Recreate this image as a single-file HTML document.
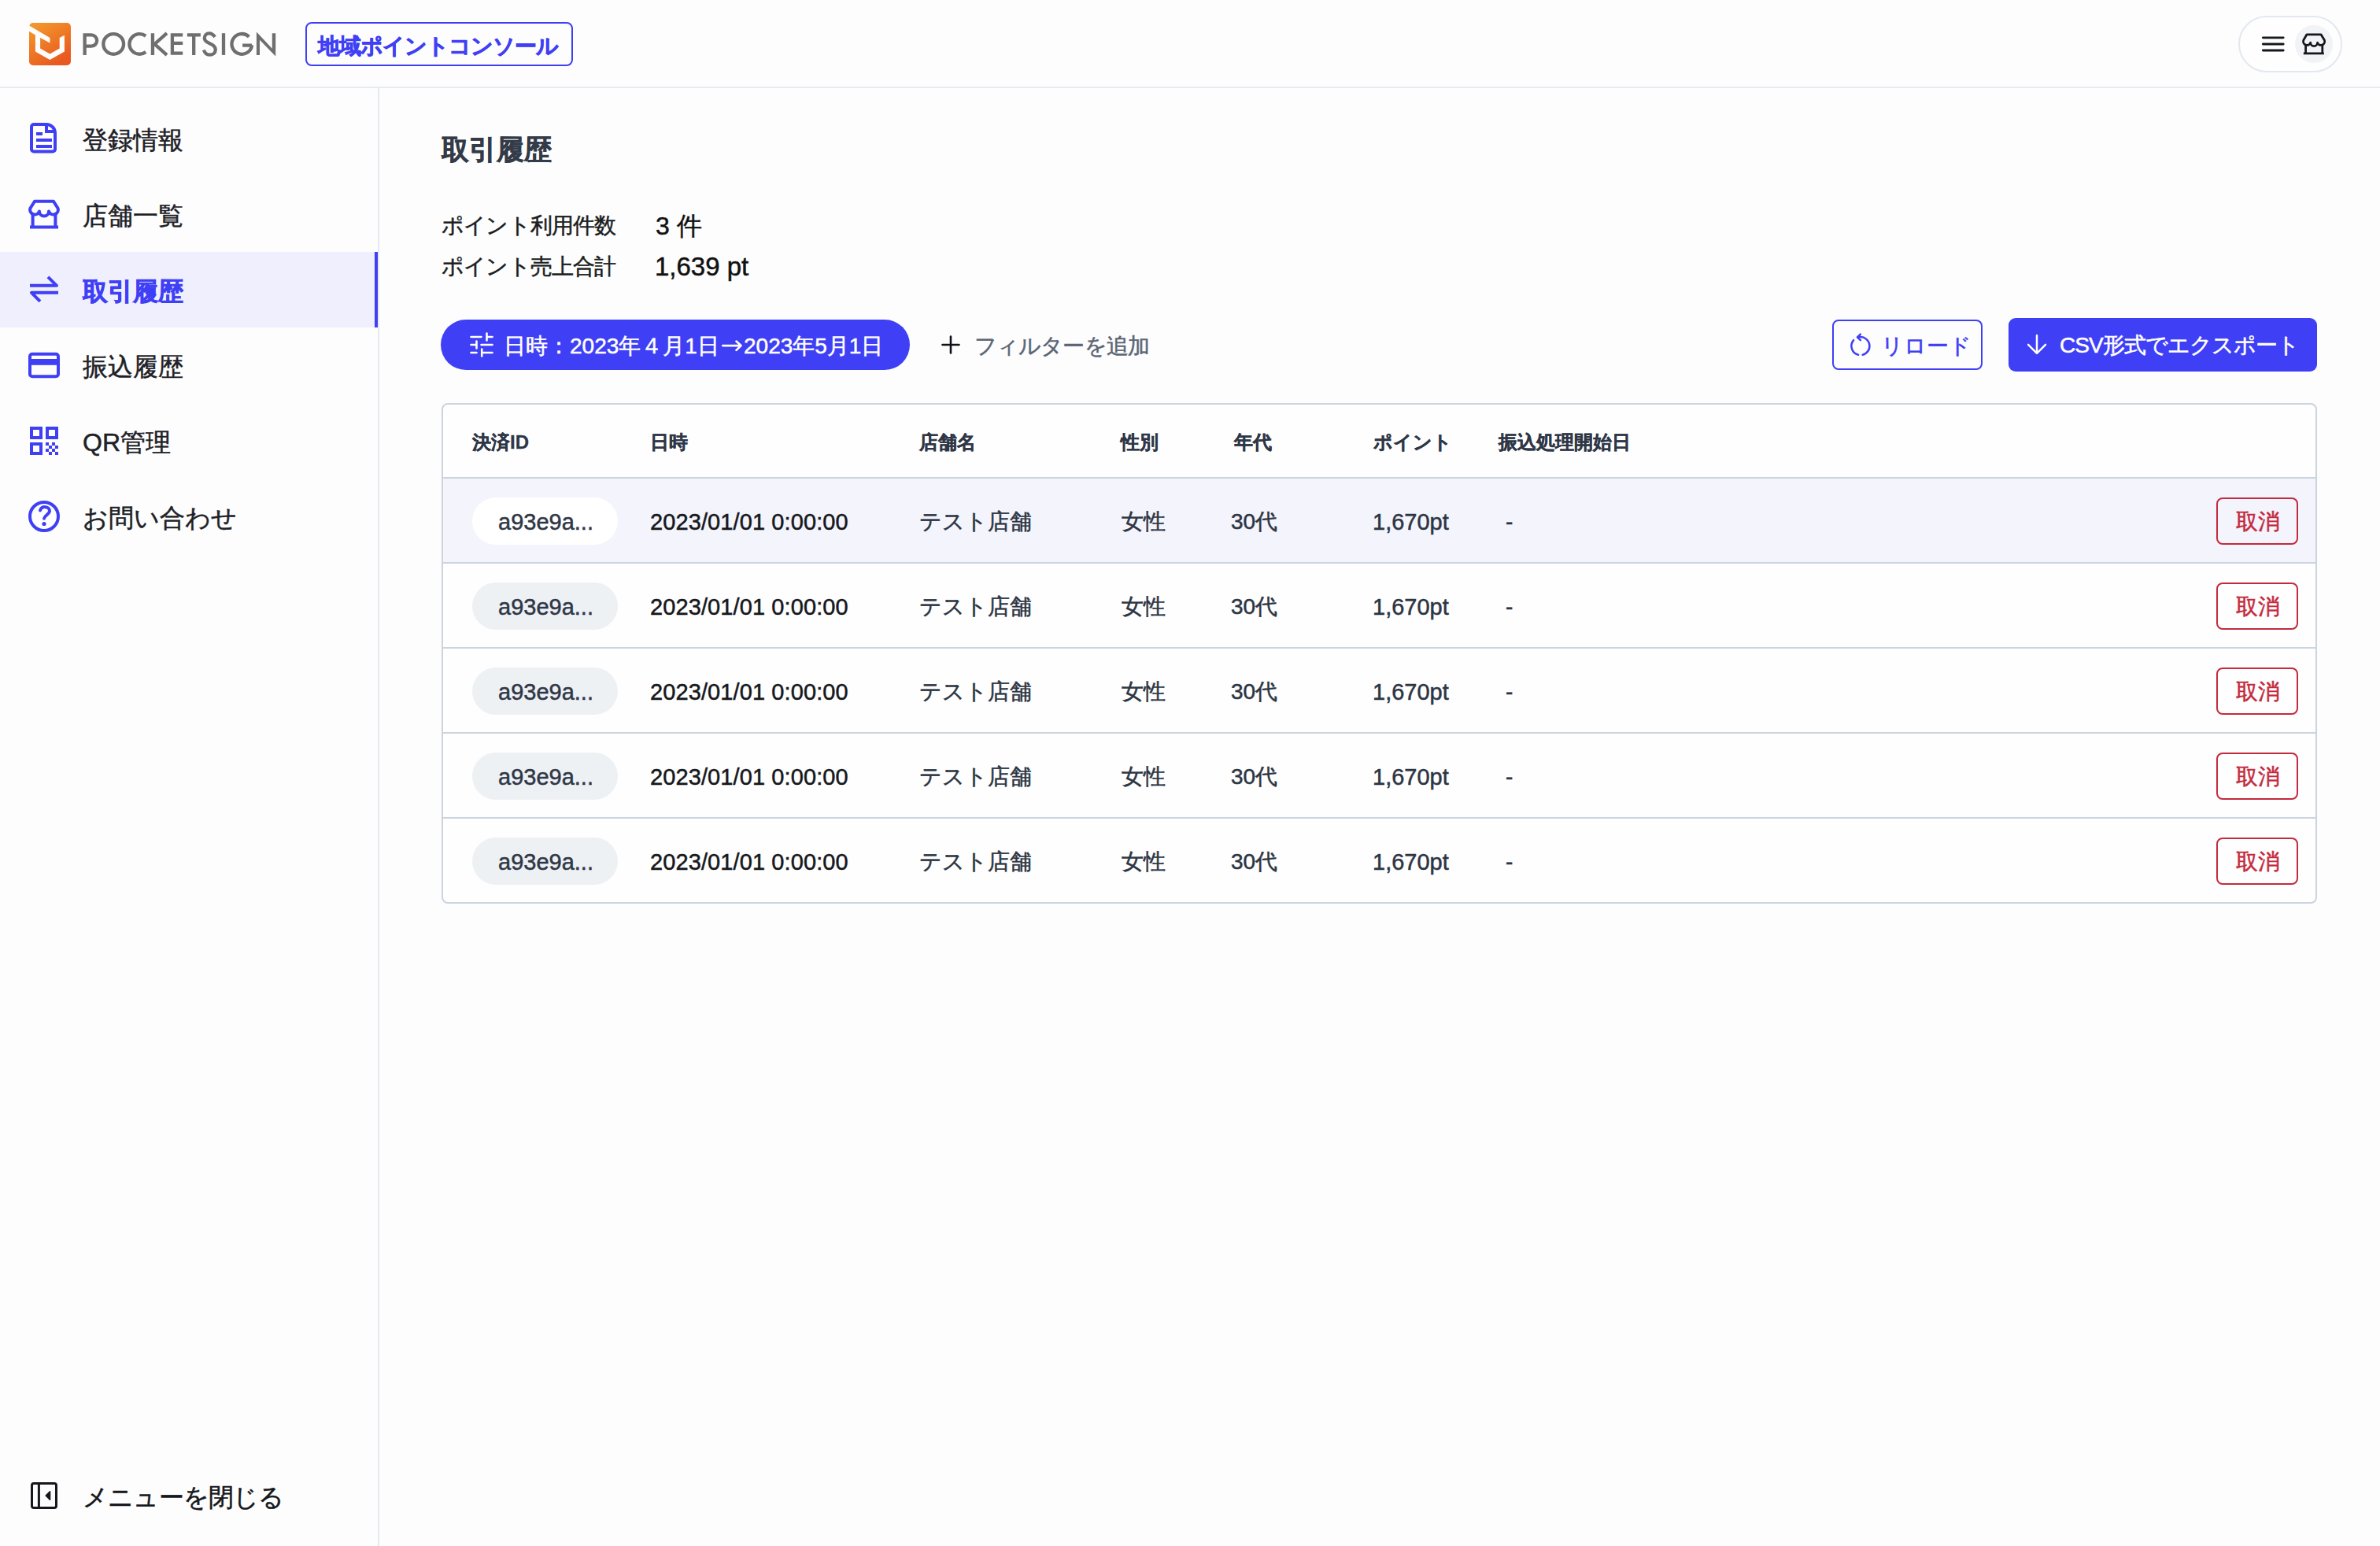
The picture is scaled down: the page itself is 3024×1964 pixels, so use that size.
<!DOCTYPE html>
<html lang="ja">
<head>
<meta charset="utf-8">
<style>
html,body{margin:0;padding:0;}
body{-webkit-text-stroke:0.5px currentColor;width:3024px;height:1964px;position:relative;overflow:hidden;background:#fdfdfd;font-family:"Liberation Sans",sans-serif;color:#1b1d22;}
.a{position:absolute;white-space:nowrap;}
svg{position:absolute;overflow:visible;}
.hdr{left:0;top:0;width:3024px;height:110px;border-bottom:2px solid #e6eaf0;background:#fdfdfd;}
.side{left:0;top:112px;width:480px;height:1852px;border-right:2px solid #e6eaf0;}
.nav{left:0;width:480px;height:96px;}
.navt{left:105px;font-size:32px;line-height:40px;color:#1e2127;}
.blue{color:#3f3ff5;}
.t-h{-webkit-text-stroke:0.3px currentColor;font-size:24px;font-weight:bold;line-height:30px;color:#2f3747;}
.t-b{letter-spacing:0;font-size:28px;line-height:34px;color:#16181c;}
.chip{left:600px;width:185px;height:60px;border-radius:30px;background:#eef1f4;}
.cancel{left:2816px;width:100px;height:56px;border:2px solid #c42a3d;border-radius:8px;}
.rowline{left:563px;width:2379px;height:2px;background:#cbd4df;}
</style>
</head>
<body>
<!-- HEADER -->
<div class="a hdr"></div>
<svg style="left:37px;top:29px" width="53" height="54" viewBox="0 0 53 54">
  <defs><linearGradient id="lg" x1="0" y1="0" x2="0.6" y2="1">
    <stop offset="0" stop-color="#f49d2d"/><stop offset="1" stop-color="#e8591f"/></linearGradient></defs>
  <rect x="0" y="0" width="53" height="54" rx="5" fill="url(#lg)"/>
  <path d="M-2 2.3 L26.4 18.9 L26.4 25.5 L14.1 18.9 L14.1 32.6 L26.4 39.6 L38.7 32.6 L38.7 18.9 L44.9 15.8 L44.9 36.5 L26.4 46.9 L7.9 36.5 L7.9 15.4 L-2 9.6 Z" fill="#fdfdfd"/>
</svg>
<svg style="left:100px;top:30px" width="260" height="50" viewBox="0 0 260 50" fill="none" stroke="#6f6f6f" stroke-width="4.3">
  <path d="M7.65 39.9 V14.4 H16 A7.15 7.15 0 0 1 16 28.7 H7.65"/>
  <circle cx="44.2" cy="25.9" r="12.85"/>
  <path d="M85.2 15.8 A12.85 12.85 0 1 0 85.2 36"/>
  <path d="M93.95 12.2 V39.9 M112 12.2 L96.5 26 L112 39.9"/>
  <path d="M132.2 14.4 H118.9 V37.7 H132.2 M118.9 24.85 H132.2" stroke-linejoin="miter"/>
  <path d="M137.9 14.4 H154.9 M146.2 14.4 V39.9"/>
  <path d="M173 17 C171 14 168.5 12.4 166 12.4 C162 12.4 159.8 15 159.8 18.5 C159.8 22 163 23.8 166.5 25.2 C171 27 173.8 29 173.8 33 C173.8 37 170.5 39.7 166.5 39.7 C162.5 39.7 160 37 159 33.5"/>
  <path d="M184 12.2 V39.9"/>
  <path d="M216.4 16.8 A12.85 12.85 0 1 0 220.1 27.2 M208.1 27.7 H220"/>
  <path d="M225.9 10.4 L245.8 31.7 L245.8 12.2 L250.2 12.2 L250.2 41.5 L230 20.8 L230 39.9 L225.9 39.9 Z" fill="#6f6f6f" stroke="none"/>
</svg>
<div class="a" style="left:388px;top:28px;width:336px;height:52px;border:2px solid #3f3ff5;border-radius:8px;"></div>
<div class="a blue" style="left:404px;top:39px;font-size:28px;line-height:40px;font-weight:bold;letter-spacing:-1px;-webkit-text-stroke:0.7px currentColor;">地域ポイントコンソール</div>

<div class="a" style="left:2844px;top:20px;width:128px;height:68px;border:2px solid #e3e8ef;border-radius:36px;background:#fefefe;"></div>
<svg style="left:2860px;top:30px" width="60" height="50" stroke="#15171c" stroke-width="2.8" stroke-linecap="round">
  <path d="M15.3 17.8 H41.2 M15.3 26 H41.2 M15.3 34 H41.2"/>
</svg>
<div class="a" style="left:2916px;top:32px;width:48px;height:48px;border-radius:24px;background:#f1f3f6;"></div>
<svg style="left:2910px;top:26px" width="60" height="60" viewBox="0 0 60 60" fill="none" stroke="#15171c" stroke-width="2.8" stroke-linejoin="round">
  <path d="M21 17.8 H39 L43.4 25 A4.6 4.6 0 0 1 34.5 28.2 A4.4 4.4 0 0 1 25.7 28.2 A4.6 4.6 0 0 1 16.8 25 Z"/>
  <path d="M19.6 30.5 V41.8 M40.8 30.5 V41.8 M16.8 41.8 H42.8"/>
</svg>

<!-- SIDEBAR -->
<div class="a side"></div>
<div class="a nav" style="top:320px;width:476px;background:#efeffd;"></div>
<div class="a" style="left:476px;top:320px;width:4px;height:96px;background:#3f3ff5;"></div>

<svg style="left:28px;top:146px" width="60" height="60" viewBox="0 0 60 60" fill="none" stroke="#3f3ff5" stroke-width="4">
  <path d="M31 12 H15 A3 3 0 0 0 12 15 V43.5 A3 3 0 0 0 15 46.5 H39 A3 3 0 0 0 42 43.5 V23 A11 11 0 0 0 31 12 Z"/>
  <path d="M31 12 V21 H42 M18 24 H26 M18 32 H38 M18 40 H38"/>
</svg>
<div class="a navt" style="top:158px;">登録情報</div>

<svg style="left:28px;top:242px" width="60" height="60" viewBox="0 0 60 60" fill="none" stroke="#3f3ff5" stroke-width="4" stroke-linejoin="round">
  <path d="M16 13.7 H40 L45.5 22.5 A6 6 0 0 1 34 26.5 A6 6 0 0 1 22 26.5 A6 6 0 0 1 10.5 22.5 Z"/>
  <path d="M13.6 30 V46.4 M42.4 30 V46.4 M10 46.4 H46"/>
</svg>
<div class="a navt" style="top:254px;">店舗一覧</div>

<svg style="left:28px;top:338px" width="60" height="60" viewBox="0 0 60 60" fill="none" stroke="#3f3ff5" stroke-width="4" stroke-linejoin="round">
  <path d="M10 24.8 H44 L33 13.8 M46 33.8 H12 L23 44.8"/>
</svg>
<div class="a navt blue" style="top:350px;font-weight:bold;-webkit-text-stroke:0.7px currentColor;">取引履歴</div>

<svg style="left:28px;top:434px" width="60" height="60" viewBox="0 0 60 60" fill="none" stroke="#3f3ff5" stroke-width="4">
  <rect x="10" y="15.8" width="36" height="28.5" rx="3"/>
  <rect x="10" y="22" width="36" height="7.8" fill="#3f3ff5" stroke="none"/>
</svg>
<div class="a navt" style="top:446px;">振込履歴</div>

<svg style="left:28px;top:530px" width="60" height="60" viewBox="0 0 60 60" fill="#3f3ff5">
  <path fill-rule="evenodd" d="M10 12 H26 V28 H10 Z M14 16 V24 H22 V16 Z M30 12 H46 V28 H30 Z M34 16 V24 H42 V16 Z M10 32 H26 V48 H10 Z M14 36 V44 H22 V36 Z"/>
  <path d="M30 32 h4 v4 h-4z M38 32 h4 v4 h-4z M34 36 h4 v4 h-4z M42 36 h4 v4 h-4z M30 40 h4 v4 h-4z M38 40 h4 v4 h-4z M34 44 h4 v4 h-4z M42 44 h4 v4 h-4z"/>
</svg>
<div class="a navt" style="top:542px;">QR管理</div>

<svg style="left:28px;top:626px" width="60" height="60" viewBox="0 0 60 60" fill="none" stroke="#3f3ff5" stroke-width="4" stroke-linecap="round">
  <circle cx="28" cy="30" r="18"/>
  <path d="M23 22.4 C24 19.5 26 18 28.5 18 C32 18 35 20 35 23 C35 27 29 28.5 28 32.6"/>
  <circle cx="28" cy="39.5" r="2.6" fill="#3f3ff5" stroke="none"/>
</svg>
<div class="a navt" style="top:638px;">お問い合わせ</div>

<svg style="left:28px;top:1870px" width="60" height="60" viewBox="0 0 60 60" fill="none" stroke="#15171c" stroke-width="3">
  <rect x="12.5" y="14.5" width="31" height="31" rx="2.5"/>
  <path d="M21.4 14.5 V45.5"/>
  <path d="M35.5 24.9 L30.2 30 L35.5 35.2 Z" fill="#15171c" stroke-width="1.6" stroke-linejoin="round"/>
</svg>
<div class="a navt" style="top:1882px;color:#15171c;letter-spacing:-0.8px;">メニューを閉じる</div>

<!-- MAIN -->
<div class="a" style="left:561px;top:169px;font-size:35px;line-height:42px;font-weight:bold;color:#333a48;-webkit-text-stroke:0.5px currentColor;">取引履歴</div>
<div class="a" style="left:561px;top:270px;font-size:28px;line-height:34px;color:#1b1d22;letter-spacing:-0.8px;">ポイント利用件数</div>
<div class="a" style="left:561px;top:322px;font-size:28px;line-height:34px;color:#1b1d22;letter-spacing:-0.8px;">ポイント売上合計</div>
<div class="a" style="left:833px;top:268px;font-size:32px;line-height:38px;color:#111;">3 件</div>
<div class="a" style="left:832px;top:320px;font-size:33px;line-height:38px;color:#111;">1,639 pt</div>

<!-- filter row -->
<div class="a" style="left:560px;top:406px;width:596px;height:64px;border-radius:32px;background:#3f3ff5;"></div>
<svg style="left:580px;top:410px" width="60" height="56" fill="none" stroke="#fff" stroke-width="2.6" stroke-linecap="round">
  <path d="M18.5 18 H31.5 M38.5 13.5 V22.5 M38.5 18 H45.5 M18.5 28 H25.5 M25.5 23.5 V32.5 M31.5 28 H45.5 M18.5 38 H25.5 M32.2 33.5 V42.5 M32.2 38 H45.5"/>
</svg>
<div class="a" style="left:640px;top:423px;font-size:28px;line-height:34px;color:#fff;">日時：2023年４月1日</div>
<svg style="left:900px;top:415px" width="60" height="50" fill="none" stroke="#fff" stroke-width="2.7" stroke-linecap="round" stroke-linejoin="round"><path d="M18.3 24.1 H41.5 M35.5 18.6 L41.5 24.1 L35.5 29.9"/></svg>
<div class="a" style="left:945px;top:423px;font-size:28px;line-height:34px;color:#fff;">2023年5月1日</div>
<svg style="left:1180px;top:410px" width="60" height="56" fill="none" stroke="#111118" stroke-width="2.6" stroke-linecap="round">
  <path d="M17.5 28 H38.5 M28 17.5 V38.5"/>
</svg>
<div class="a" style="left:1238px;top:423px;font-size:28px;line-height:34px;color:#5b6574;letter-spacing:-0.9px;">フィルターを追加</div>

<div class="a" style="left:2328px;top:406px;width:187px;height:60px;border:2px solid #3f3ff5;border-radius:8px;background:#fdfdfd;"></div>
<svg style="left:2340px;top:414px" width="50" height="48" fill="none" stroke="#3f3ff5" stroke-width="2.5" stroke-linecap="round" stroke-linejoin="round">
  <path d="M15.14 18.15 A11.5 11.5 0 0 0 21.12 36.76 M26.68 36.76 A11.5 11.5 0 0 0 23.6 14.1 L20.2 14.4 M23.9 10.6 L19.9 14.4 L23.9 18.2"/>
</svg>
<div class="a blue" style="left:2390px;top:423px;font-size:28px;line-height:34px;">リロード</div>

<div class="a" style="left:2552px;top:404px;width:392px;height:68px;border-radius:9px;background:#3f3ff5;"></div>
<svg style="left:2565px;top:414px" width="50" height="48" fill="none" stroke="#fff" stroke-width="2.5" stroke-linecap="round" stroke-linejoin="round">
  <path d="M23 12.1 V34.8 M12.1 23.9 L23 34.8 L34 23.9"/>
</svg>
<div class="a" style="left:2617px;top:422px;font-size:28px;line-height:34px;color:#fff;letter-spacing:-1px;">CSV形式でエクスポート</div>

<!-- TABLE -->
<div class="a" style="left:561px;top:512px;width:2379px;height:632px;border:2px solid #cbd4df;border-radius:8px;background:#fefefe;"></div>
<div class="a" style="left:563px;top:608px;width:2379px;height:106px;background:#f4f4fd;"></div>
<div class="a rowline" style="top:606px;"></div>
<div class="a rowline" style="top:714px;"></div>
<div class="a rowline" style="top:822px;"></div>
<div class="a rowline" style="top:930px;"></div>
<div class="a rowline" style="top:1038px;"></div>

<div class="a t-h" style="left:600px;top:547px;">決済ID</div>
<div class="a t-h" style="left:826px;top:547px;">日時</div>
<div class="a t-h" style="left:1168px;top:547px;">店舗名</div>
<div class="a t-h" style="left:1424px;top:547px;">性別</div>
<div class="a t-h" style="left:1568px;top:547px;">年代</div>
<div class="a t-h" style="left:1745px;top:547px;">ポイント</div>
<div class="a t-h" style="left:1904px;top:547px;">振込処理開始日</div>

<div id="rows">
<div class="a chip" style="top:632px;background:#ffffff;"></div>
<div class="a" style="left:633px;top:646px;font-size:29px;line-height:34px;color:#2f3747;">a93e9a...</div>
<div class="a t-b" style="left:826px;top:646px;letter-spacing:0.1px;font-size:29px;">2023/01/01 0:00:00</div>
<div class="a t-b" style="left:1168px;top:646px;color:#2c3543;">テスト店舗</div>
<div class="a t-b" style="left:1425px;top:646px;color:#2c3543;">女性</div>
<div class="a t-b" style="left:1564px;top:646px;color:#2c3543;">30代</div>
<div class="a t-b" style="left:1744px;top:646px;color:#2c3543;font-size:29px;">1,670pt</div>
<div class="a t-b" style="left:1913px;top:646px;color:#2c3543;">-</div>
<div class="a cancel" style="top:632px;"></div>
<div class="a" style="left:2841px;top:646px;font-size:28px;line-height:34px;color:#c42a3d;">取消</div>
<div class="a chip" style="top:740px;background:#eef1f4;"></div>
<div class="a" style="left:633px;top:754px;font-size:29px;line-height:34px;color:#2f3747;">a93e9a...</div>
<div class="a t-b" style="left:826px;top:754px;letter-spacing:0.1px;font-size:29px;">2023/01/01 0:00:00</div>
<div class="a t-b" style="left:1168px;top:754px;color:#2c3543;">テスト店舗</div>
<div class="a t-b" style="left:1425px;top:754px;color:#2c3543;">女性</div>
<div class="a t-b" style="left:1564px;top:754px;color:#2c3543;">30代</div>
<div class="a t-b" style="left:1744px;top:754px;color:#2c3543;font-size:29px;">1,670pt</div>
<div class="a t-b" style="left:1913px;top:754px;color:#2c3543;">-</div>
<div class="a cancel" style="top:740px;"></div>
<div class="a" style="left:2841px;top:754px;font-size:28px;line-height:34px;color:#c42a3d;">取消</div>
<div class="a chip" style="top:848px;background:#eef1f4;"></div>
<div class="a" style="left:633px;top:862px;font-size:29px;line-height:34px;color:#2f3747;">a93e9a...</div>
<div class="a t-b" style="left:826px;top:862px;letter-spacing:0.1px;font-size:29px;">2023/01/01 0:00:00</div>
<div class="a t-b" style="left:1168px;top:862px;color:#2c3543;">テスト店舗</div>
<div class="a t-b" style="left:1425px;top:862px;color:#2c3543;">女性</div>
<div class="a t-b" style="left:1564px;top:862px;color:#2c3543;">30代</div>
<div class="a t-b" style="left:1744px;top:862px;color:#2c3543;font-size:29px;">1,670pt</div>
<div class="a t-b" style="left:1913px;top:862px;color:#2c3543;">-</div>
<div class="a cancel" style="top:848px;"></div>
<div class="a" style="left:2841px;top:862px;font-size:28px;line-height:34px;color:#c42a3d;">取消</div>
<div class="a chip" style="top:956px;background:#eef1f4;"></div>
<div class="a" style="left:633px;top:970px;font-size:29px;line-height:34px;color:#2f3747;">a93e9a...</div>
<div class="a t-b" style="left:826px;top:970px;letter-spacing:0.1px;font-size:29px;">2023/01/01 0:00:00</div>
<div class="a t-b" style="left:1168px;top:970px;color:#2c3543;">テスト店舗</div>
<div class="a t-b" style="left:1425px;top:970px;color:#2c3543;">女性</div>
<div class="a t-b" style="left:1564px;top:970px;color:#2c3543;">30代</div>
<div class="a t-b" style="left:1744px;top:970px;color:#2c3543;font-size:29px;">1,670pt</div>
<div class="a t-b" style="left:1913px;top:970px;color:#2c3543;">-</div>
<div class="a cancel" style="top:956px;"></div>
<div class="a" style="left:2841px;top:970px;font-size:28px;line-height:34px;color:#c42a3d;">取消</div>
<div class="a chip" style="top:1064px;background:#eef1f4;"></div>
<div class="a" style="left:633px;top:1078px;font-size:29px;line-height:34px;color:#2f3747;">a93e9a...</div>
<div class="a t-b" style="left:826px;top:1078px;letter-spacing:0.1px;font-size:29px;">2023/01/01 0:00:00</div>
<div class="a t-b" style="left:1168px;top:1078px;color:#2c3543;">テスト店舗</div>
<div class="a t-b" style="left:1425px;top:1078px;color:#2c3543;">女性</div>
<div class="a t-b" style="left:1564px;top:1078px;color:#2c3543;">30代</div>
<div class="a t-b" style="left:1744px;top:1078px;color:#2c3543;font-size:29px;">1,670pt</div>
<div class="a t-b" style="left:1913px;top:1078px;color:#2c3543;">-</div>
<div class="a cancel" style="top:1064px;"></div>
<div class="a" style="left:2841px;top:1078px;font-size:28px;line-height:34px;color:#c42a3d;">取消</div>
</div>
</body>
</html>
